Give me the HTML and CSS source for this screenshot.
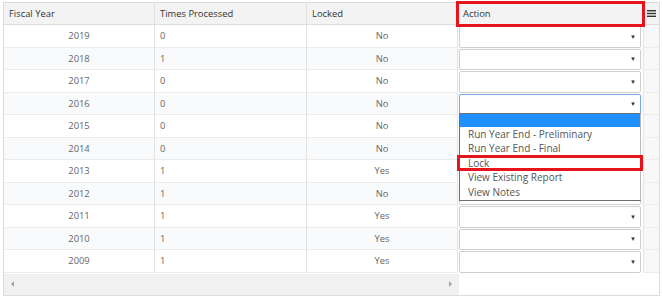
FILE: index.html
```html
<!DOCTYPE html>
<html lang="en">
<head>
    <meta charset="UTF-8">
    <title>Year End Processing</title>
    <link rel="stylesheet" href="styles.css">
</head>
<body>
    <div class="grid">
        <div class="row grid-header">
            <div class="cell">Fiscal Year</div>
            <div class="cell">Times Processed</div>
            <div class="cell">Locked</div>
            <div class="cell action-head">Action</div>
            <div class="cell menu-cell">
                <svg width="9" height="7" viewBox="0 0 9 7">
                    <rect x="0" y="0" width="9" height="1.4" fill="#333"/>
                    <rect x="0" y="2.8" width="9" height="1.4" fill="#333"/>
                    <rect x="0" y="5.6" width="9" height="1.4" fill="#333"/>
                </svg>
            </div>
        </div>

        <div class="grid-body">
            <div class="row">
                <div class="cell center">2019</div>
                <div class="cell">0</div>
                <div class="cell center">No</div>
                <div class="cell action"><div class="select"><span class="arrow">&#9660;</span></div></div>
                <div class="cell menu-cell"></div>
            </div>
            <div class="row alt">
                <div class="cell center">2018</div>
                <div class="cell">1</div>
                <div class="cell center">No</div>
                <div class="cell action"><div class="select"><span class="arrow">&#9660;</span></div></div>
                <div class="cell menu-cell"></div>
            </div>
            <div class="row">
                <div class="cell center">2017</div>
                <div class="cell">0</div>
                <div class="cell center">No</div>
                <div class="cell action"><div class="select"><span class="arrow">&#9660;</span></div></div>
                <div class="cell menu-cell"></div>
            </div>
            <div class="row alt">
                <div class="cell center">2016</div>
                <div class="cell">0</div>
                <div class="cell center">No</div>
                <div class="cell action open">
                    <div class="select focused"><span class="arrow">&#9660;</span></div>
                    <ul class="dropdown">
                        <li class="highlighted">&nbsp;</li>
                        <li>Run Year End - Preliminary</li>
                        <li>Run Year End - Final</li>
                        <li class="marked">Lock</li>
                        <li>View Existing Report</li>
                        <li>View Notes</li>
                    </ul>
                </div>
                <div class="cell menu-cell"></div>
            </div>
            <div class="row">
                <div class="cell center">2015</div>
                <div class="cell">0</div>
                <div class="cell center">No</div>
                <div class="cell action"><div class="select"><span class="arrow">&#9660;</span></div></div>
                <div class="cell menu-cell"></div>
            </div>
            <div class="row alt">
                <div class="cell center">2014</div>
                <div class="cell">0</div>
                <div class="cell center">No</div>
                <div class="cell action"><div class="select"><span class="arrow">&#9660;</span></div></div>
                <div class="cell menu-cell"></div>
            </div>
            <div class="row">
                <div class="cell center">2013</div>
                <div class="cell">1</div>
                <div class="cell center">Yes</div>
                <div class="cell action"><div class="select"><span class="arrow">&#9660;</span></div></div>
                <div class="cell menu-cell"></div>
            </div>
            <div class="row alt">
                <div class="cell center">2012</div>
                <div class="cell">1</div>
                <div class="cell center">No</div>
                <div class="cell action"><div class="select"><span class="arrow">&#9660;</span></div></div>
                <div class="cell menu-cell"></div>
            </div>
            <div class="row">
                <div class="cell center">2011</div>
                <div class="cell">1</div>
                <div class="cell center">Yes</div>
                <div class="cell action"><div class="select"><span class="arrow">&#9660;</span></div></div>
                <div class="cell menu-cell"></div>
            </div>
            <div class="row alt">
                <div class="cell center">2010</div>
                <div class="cell">1</div>
                <div class="cell center">Yes</div>
                <div class="cell action"><div class="select"><span class="arrow">&#9660;</span></div></div>
                <div class="cell menu-cell"></div>
            </div>
            <div class="row">
                <div class="cell center">2009</div>
                <div class="cell">1</div>
                <div class="cell center">Yes</div>
                <div class="cell action"><div class="select"><span class="arrow">&#9660;</span></div></div>
                <div class="cell menu-cell"></div>
            </div>
        </div>

        <div class="scroll-row">
            <div class="scrollbar">
                <span class="scroll-arrow left"></span>
                <span class="scroll-arrow right"></span>
            </div>
        </div>
    </div>
</body>
</html>
```

FILE: styles.css
```css
* {
    margin: 0;
    padding: 0;
    box-sizing: border-box;
}

body {
    font-family: 'Open Sans', 'Liberation Sans', sans-serif;
    font-size: 9.4px;
    color: #666;
    background-color: white;
    padding: 2px 3px 2px 3px;
}

.grid {
    width: 657px;
    border: 1px solid #dcdcdc;
    background-color: white;
}

.row {
    display: grid;
    grid-template-columns: 151px 152px 151px 185px 1fr;
    height: 22.5px;
}

.row.alt {
    background-color: #f9fafb;
}

.cell {
    display: flex;
    align-items: center;
    padding: 0 5px;
    border-right: 1px solid #e2e2e2;
    border-bottom: 1px solid #ececec;
    white-space: nowrap;
}

.cell.center {
    justify-content: center;
}

.grid-header {
    height: 22px;
    background-color: #f3f3f3;
    color: #333;
}

.grid-header .cell {
    border-bottom: 1px solid #dcdcdc;
}

.action-head {
    outline: 3px solid #e5141d;
    outline-offset: -1px;
    position: relative;
    z-index: 2;
}

.menu-cell {
    border-right: none;
    background-color: #f8f8f8;
    justify-content: center;
}

.grid-header .menu-cell {
    background-color: #f3f3f3;
    border-left: 1px solid #dcdcdc;
    padding: 0;
}

.grid-body .menu-cell {
    border-left: 1px solid #e6e6e6;
}

.cell.action {
    padding: 1px 2px 0 1px;
    border-right: none;
    border-bottom: none;
    position: relative;
}

.select {
    width: 100%;
    height: 100%;
    border: 1px solid #cfcfcf;
    border-radius: 2px;
    background-color: white;
    display: flex;
    align-items: center;
    justify-content: flex-end;
    padding-right: 4px;
}

.select.focused {
    border-color: #7aa7e6;
}

.arrow {
    font-size: 6px;
    color: #333;
}

.dropdown {
    list-style: none;
    position: absolute;
    top: 20px;
    left: 1px;
    width: 182px;
    background-color: white;
    border: 1px solid #6d6d73;
    border-right-color: #b9b9b9;
    z-index: 3;
    color: #555;
    padding-bottom: 1px;
}

.dropdown li {
    height: 14.5px;
    line-height: 15px;
    padding-left: 8px;
    font-size: 10px;
}

.dropdown li.highlighted {
    height: 13px;
    background-color: #1e90ff;
}

.dropdown li.marked {
    outline: 3px solid #e5141d;
    outline-offset: -2px;
    margin: 0 -2px;
    padding-left: 10px;
}

.scroll-row {
    height: 22px;
    padding-top: 1px;
}

.scrollbar {
    width: 455px;
    height: 100%;
    background-color: #f1f1f1;
    position: relative;
    display: flex;
    align-items: center;
    justify-content: space-between;
    padding: 0 7px;
}

.scroll-arrow {
    width: 0;
    height: 0;
    border-top: 3px solid transparent;
    border-bottom: 3px solid transparent;
}

.scroll-arrow.left {
    border-right: 3px solid #a3a3a3;
}

.scroll-arrow.right {
    border-left: 3px solid #a3a3a3;
}
```
